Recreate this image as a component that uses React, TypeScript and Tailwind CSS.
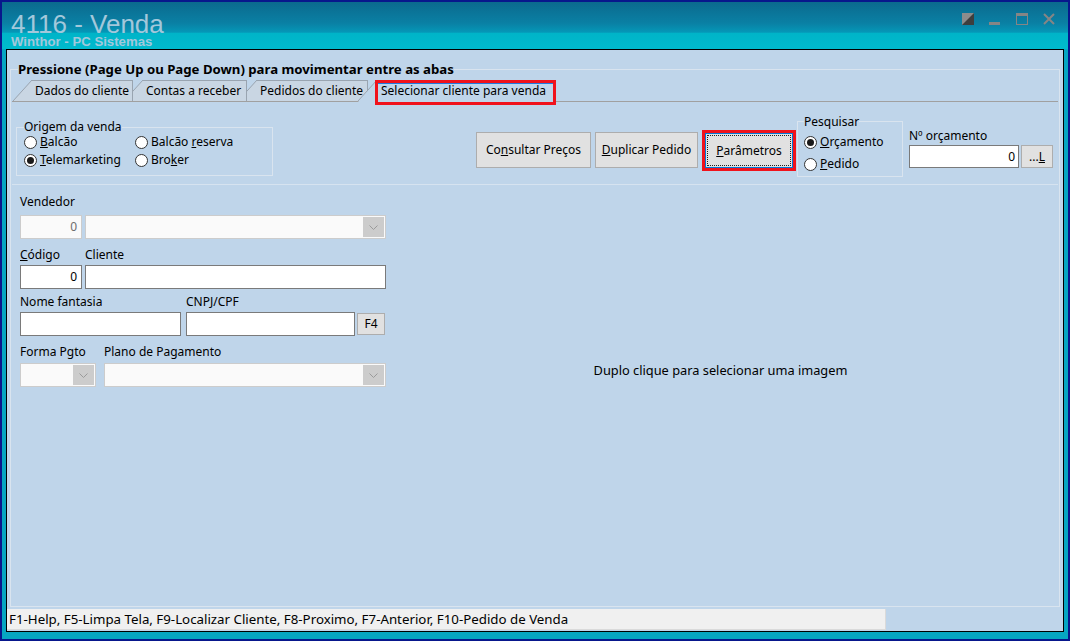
import React from 'react';

const ui = "font-['Segoe_UI','Noto_Sans',sans-serif]";

function Radio({ children, checked = false }: { children: React.ReactNode; checked?: boolean }) {
  return (
    <div className="flex items-center gap-[3px]">
      <span className="flex h-[13px] w-[13px] shrink-0 items-center justify-center rounded-full border border-[#333333] bg-white">
        {checked && <span className="h-[7px] w-[7px] rounded-full bg-[#1a1a1a]" />}
      </span>
      <span>{children}</span>
    </div>
  );
}

function Chevron() {
  return (
    <svg width="9" height="5" viewBox="0 0 9 5">
      <polyline points="0.5,0.5 4.5,4.5 8.5,0.5" fill="none" stroke="#9a9a9a" strokeWidth="1" />
    </svg>
  );
}

function Combo({ className }: { className: string }) {
  return (
    <div className={`flex h-[24px] border border-[#cccccc] bg-[#fafafa] p-[1px] ${className}`}>
      <div className="flex-1" />
      <div className="flex w-[21px] items-center justify-center bg-[#cccccc]">
        <Chevron />
      </div>
    </div>
  );
}

function Field({ className, value, disabled = false }: { className: string; value?: string; disabled?: boolean }) {
  return (
    <div
      className={`flex h-[24px] items-center justify-end border px-[4px] ${
        disabled ? 'border-[#cccccc] bg-[#fafafa] text-[#6d6d6d]' : 'border-[#7a7a7a] bg-white text-black'
      } ${className}`}
    >
      {value}
    </div>
  );
}

function Tab({ label, bodyWidth, className }: { label: string; bodyWidth: string; className: string }) {
  return (
    <div className={`relative flex h-[21px] ${className}`}>
      <svg width="19" height="21" className="block shrink-0">
        <polygon points="0,21 19,0 19,21" fill="#c9d6e3" />
        <line x1="0" y1="21" x2="19" y2="0" stroke="#99a4b0" />
      </svg>
      <div className={`border-t border-r border-[#99a4b0] bg-[#c9d6e3] pl-[3px] leading-[20px] ${bodyWidth}`}>{label}</div>
    </div>
  );
}

function WindowButtons() {
  return (
    <div className="flex items-start gap-[15px] pt-[11px]">
      <svg width="12" height="12" viewBox="0 0 12 12">
        <rect x="0" y="0" width="12" height="12" fill="#8c8c8c" />
        <polygon points="12,0 12,12 0,12" fill="#3e3e3e" />
      </svg>
      <svg width="12" height="12" viewBox="0 0 12 12">
        <rect x="0" y="9" width="11" height="3" fill="#858585" />
      </svg>
      <svg width="12" height="12" viewBox="0 0 12 12">
        <rect x="0.5" y="0.5" width="11" height="11" fill="none" stroke="#858585" />
        <rect x="0" y="0" width="12" height="3" fill="#858585" />
      </svg>
      <svg width="12" height="12" viewBox="0 0 12 12">
        <path d="M1 1 L11 11 M11 1 L1 11" stroke="#858585" strokeWidth="2" />
      </svg>
    </div>
  );
}

export default function App() {
  return (
    <div className={`h-[641px] w-[1070px] overflow-hidden bg-[#08178c] p-[2px] text-[12px] text-black ${ui}`}>
      <div className="flex h-full flex-col bg-[#06a6c2]">
        {/* title bar */}
        <div className="flex h-[47px] shrink-0 justify-between bg-[linear-gradient(180deg,#0b6a8e_0%,#0a80a4_45%,#0597b7_64%,#00b4c8_67%,#00bacd_100%)] pl-[9px] pr-[13px]">
          <div className="pt-[10px] font-['Liberation_Sans',Arial,sans-serif] text-[#a3c8db]">
            <div className="text-[26px] leading-[24px]">4116 - Venda</div>
            <div className="text-[13.2px] font-bold leading-[11px]">Winthor - PC Sistemas</div>
          </div>
          <WindowButtons />
        </div>

        {/* window body */}
        <div className="mx-[4px] mb-[7px] flex flex-1 flex-col border border-black bg-[#bfd5ea]">
          <fieldset className="mx-[3px] mt-[11px] flex min-h-0 flex-1 flex-col border border-[#d9e4ef]">
            <legend className="ml-[7px] text-[13.2px] font-bold leading-[16px]">
              Pressione (Page Up ou Page Down) para movimentar entre as abas
            </legend>

            {/* tabs */}
            <div className="mt-[3px] flex pl-[2px]">
              <Tab label="Dados do cliente" bodyWidth="w-[101px]" className="z-[3]" />
              <Tab label="Contas a receber" bodyWidth="w-[104px]" className="z-[2] -ml-[9px]" />
              <Tab label="Pedidos do cliente" bodyWidth="w-[111px]" className="z-[1] -ml-[9px]" />
              <div className="relative z-[4] -mb-px -ml-[10px] flex h-[22px]">
                <svg width="19" height="22" className="block shrink-0">
                  <polygon points="0,22 19,0 19,22" fill="#bfd5ea" />
                  <line x1="0" y1="21" x2="19" y2="0" stroke="#99a4b0" />
                </svg>
                <div className="relative w-[178px] border-t border-r border-[#99a4b0] bg-[#bfd5ea] pl-[4px] leading-[20px]">
                  Selecionar cliente para venda
                  <div className="absolute -top-px -right-[2px] -bottom-[3px] -left-[2px] border-[3px] border-[#f0121c]">
                    <div className="h-px bg-[#1e7be0]" />
                  </div>
                </div>
              </div>
            </div>

            {/* tab page */}
            <div className="mx-px flex flex-1 flex-col border-t border-[#a0a0a0]">
              {/* top panel */}
              <div className="flex h-[83px] shrink-0 items-start border-b border-[#d6e3f0]">
                <fieldset className="mt-[19px] ml-[4px] h-[55px] w-[257px] border border-[#d9e4ef]">
                  <legend className="ml-[7px] leading-[12px]">Origem da venda</legend>
                  <div className="grid grid-cols-[111px_1fr] pl-[7px] leading-[18px]">
                    <Radio>
                      <u>B</u>alcão
                    </Radio>
                    <Radio>
                      Balcão <u>r</u>eserva
                    </Radio>
                    <Radio checked>
                      <u>T</u>elemarketing
                    </Radio>
                    <Radio>
                      Bro<u>k</u>er
                    </Radio>
                  </div>
                </fieldset>

                <div className="mr-[5px] ml-auto flex items-start">
                  <button className="mt-[30px] h-[36px] w-[115px] border border-[#adadad] bg-[#e1e1e1]">
                    Co<u>n</u>sultar Preços
                  </button>
                  <button className="mt-[30px] ml-[4px] h-[36px] w-[103px] border border-[#adadad] bg-[#e1e1e1]">
                    <u>D</u>uplicar Pedido
                  </button>
                  <div className="mt-[28px] ml-[4px] border-[3px] border-[#f0121c]">
                    <button className="flex h-[35px] w-[88px] items-center justify-center border border-[#0078d7] bg-[#e1e1e1] p-px">
                      <span className="flex h-full w-full items-center justify-center border border-dotted border-[#222222]">
                        <span>
                          <u>P</u>arâmetros
                        </span>
                      </span>
                    </button>
                  </div>

                  <fieldset className="mt-[13px] ml-px h-[62px] w-[106px] border border-[#d9e4ef]">
                    <legend className="ml-[6px] leading-[13px]">Pesquisar</legend>
                    <div className="mt-[3px] flex flex-col pl-[6px]">
                      <div className="flex h-[22px] items-center">
                        <Radio checked>
                          <u>O</u>rçamento
                        </Radio>
                      </div>
                      <div className="flex h-[22px] items-center">
                        <Radio>
                          <u>P</u>edido
                        </Radio>
                      </div>
                    </div>
                  </fieldset>

                  <div className="mt-[26px] ml-[6px] flex flex-col">
                    <div className="leading-[15px]">Nº orçamento</div>
                    <div className="mt-[2px] flex gap-[2px]">
                      <div className="flex h-[23px] w-[110px] items-center justify-end border border-[#7a7a7a] bg-white px-[3px]">
                        0
                      </div>
                      <button className="h-[23px] w-[32px] border border-[#adadad] bg-[#e1e1e1]">
                        ...<u>L</u>
                      </button>
                    </div>
                  </div>
                </div>
              </div>

              {/* lower area */}
              <div className="flex flex-1">
                <div className="flex w-[375px] shrink-0 flex-col pt-[9px] pl-[8px] leading-[16px]">
                  <div>Vendedor</div>
                  <div className="mt-[5px] flex gap-[3px]">
                    <Field className="w-[62px]" value="0" disabled />
                    <Combo className="w-[301px]" />
                  </div>

                  <div className="mt-[8px] flex">
                    <div className="w-[65px]">
                      <u>C</u>ódigo
                    </div>
                    <div>Cliente</div>
                  </div>
                  <div className="mt-[2px] flex gap-[3px]">
                    <Field className="w-[62px]" value="0" />
                    <Field className="w-[301px]" />
                  </div>

                  <div className="mt-[5px] flex">
                    <div className="w-[166px]">Nome fantasia</div>
                    <div>CNPJ/CPF</div>
                  </div>
                  <div className="mt-[2px] flex items-start">
                    <Field className="w-[161px]" />
                    <Field className="ml-[5px] w-[169px]" />
                    <button className="mt-px ml-[2px] h-[22px] w-[28px] border border-[#adadad] bg-[#e1e1e1] leading-[20px]">
                      F4
                    </button>
                  </div>

                  <div className="mt-[8px] flex">
                    <div className="w-[84px]">Forma Pgto</div>
                    <div>Plano de Pagamento</div>
                  </div>
                  <div className="mt-[3px] flex gap-[8px]">
                    <Combo className="w-[76px]" />
                    <Combo className="w-[282px]" />
                  </div>
                </div>

                <div className="flex flex-1 justify-center pt-[177px] pr-[4px] text-[12.8px] leading-[17px]">
                  Duplo clique para selecionar uma imagem
                </div>
              </div>
            </div>
          </fieldset>

          <div className="mt-[2px] mb-px h-[21px] w-[879px] shrink-0 border-r border-b border-[#dadada] bg-[#f0f0f0] pl-[2px] text-[13.3px] leading-[20px]">
            F1-Help, F5-Limpa Tela, F9-Localizar Cliente, F8-Proximo, F7-Anterior, F10-Pedido de Venda
          </div>
        </div>
      </div>
    </div>
  );
}
